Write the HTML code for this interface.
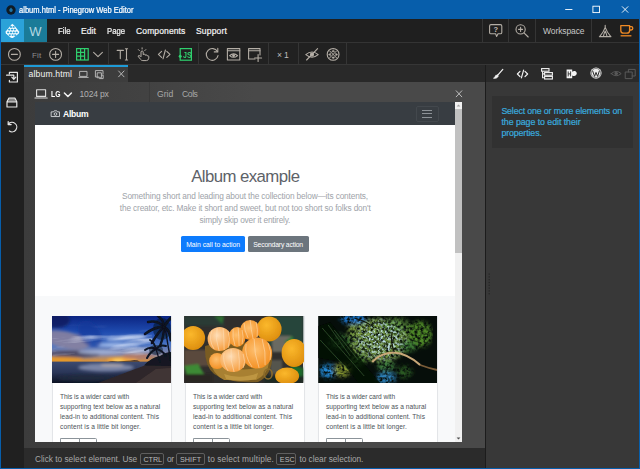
<!DOCTYPE html>
<html lang="en"><head><meta charset="utf-8"><title>album.html - Pinegrow Web Editor</title>
<style>
html,body{margin:0;padding:0;}
body{width:640px;height:469px;position:relative;overflow:hidden;background:#383838;font-family:"Liberation Sans",sans-serif;}
.a{position:absolute;}
.t{position:absolute;white-space:pre;line-height:1;font-family:"Liberation Sans",sans-serif;}
svg{position:absolute;overflow:visible;}
.sep{position:absolute;width:1px;background:#353535;}
.ic{fill:none;stroke:#b4aea6;stroke-width:1.1;stroke-linecap:round;stroke-linejoin:round;}
.kbd{position:absolute;border:1px solid #5e5e5e;border-radius:2px;box-sizing:border-box;background:#2a2a2a;}
.card{top:213.5px;width:120px;height:140px;background:#fff;border:0.5px solid #e3e5e8;box-sizing:border-box;box-shadow:0 0.5px 1px rgba(0,0,0,.08);}
.bg{top:336px;width:19.5px;height:12px;border:0.6px solid #8b9399;border-right:none;border-radius:1.5px 0 0 1.5px;box-sizing:border-box;background:#fff;}
.bg2{top:336px;width:17.5px;height:12px;border:0.6px solid #8b9399;border-radius:0 1.5px 1.5px 0;box-sizing:border-box;background:#fff;}

</style></head>
<body>
<!-- window title bar -->
<div class="a" id="titlebar" style="left:0;top:0;width:640px;height:19px;background:#075eab;"></div>
<svg style="left:5.6px;top:4.6px" width="10" height="10" viewBox="0 0 10 10"><circle cx="5" cy="5" r="4.7" fill="#0f1a24"/><path d="M5 2.4 L6.8 4.8 Q7 6.6 5 7.2 Q3 6.6 3.2 4.8 Z" fill="#1d74a8"/></svg>
<svg style="left:560px;top:0" width="80" height="19" viewBox="0 0 80 19"><g stroke="#fff" stroke-width="0.9" fill="none"><path d="M5.2 9.5 H12.4"/><rect x="32.9" y="6.2" width="6.6" height="6.4"/><path d="M62 6.4 L68.2 12.6 M68.2 6.4 L62 12.6"/></g></svg>

<!-- menu bar -->
<div class="a" id="menubar" style="left:0;top:19px;width:640px;height:24px;background:#1f1f1f;"></div>
<div class="a" style="left:0;top:19px;width:24px;height:23px;background:#2ba2d9;"></div>
<div class="a" style="left:24px;top:19px;width:23px;height:23px;background:#1a7b98;"></div>
<div class="a" style="left:0;top:42px;width:640px;height:1px;background:#343434;"></div>

<!-- toolbar -->
<div class="a" id="toolbar" style="left:0;top:43px;width:640px;height:21px;background:#212121;"></div>
<div class="a" style="left:0;top:64px;width:640px;height:1px;background:#363636;"></div>

<!-- left sidebar -->
<div class="a" id="sidebar" style="left:0;top:65px;width:24px;height:404px;background:#202020;"></div>

<!-- tab bar -->
<div class="a" id="tabbar" style="left:24px;top:65px;width:461px;height:17.400px;background:#292929;"></div>
<div class="a" id="tab" style="left:24px;top:65px;width:104px;height:17.400px;background:#3d3d3d;border-top:2.400px solid #1e9bd7;box-sizing:border-box;"></div>

<!-- page view -->
<div class="a" id="pageview" style="left:24px;top:82.400px;width:461px;height:365.600px;background:linear-gradient(to right,#3c3c3c 0,#424242 120px,#494949 230px);"></div>
<div class="a" style="left:149px;top:82px;width:1px;height:20px;background:#3a3a3a;"></div>

<!-- status bar -->
<div class="a" id="status" style="left:24px;top:448px;width:461px;height:21px;background:#2b2b2b;"></div>

<!-- right panel -->
<div class="a" style="left:485px;top:65px;width:1px;height:404px;background:#1c1c1c;"></div>
<div class="a" id="rtabs" style="left:486px;top:65px;width:154px;height:17.400px;background:#2a2a2a;"></div>
<div class="a" id="rpanel" style="left:486px;top:82.400px;width:154px;height:386.600px;background:#383838;"></div>
<div class="a" style="left:492px;top:95.5px;width:141px;height:52.5px;background:#313131;"></div>

<!-- window border -->
<div class="a" style="left:0;top:19px;width:1px;height:450px;background:#075eab;"></div>
<div class="a" style="left:639px;top:19px;width:1px;height:450px;background:#075eab;"></div>
<div class="a" style="left:0;top:468px;width:640px;height:1px;background:#075eab;"></div>

<!-- the page (iframe) -->
<div class="a" id="page" style="left:35px;top:102px;width:427px;height:340px;background:#f8f9fa;overflow:hidden;">
  <div class="a" style="left:0;top:0;width:420px;height:23px;background:#383d42;"></div>
  <div class="a" style="left:0;top:23px;width:420px;height:171px;background:#ffffff;"></div>
  <!-- navbar brand icon + toggler -->
  <svg style="left:15.800px;top:8.200px" width="9" height="7.200" viewBox="0 0 10 8"><path class="ic" style="stroke:#e8eaec;stroke-width:0.9" d="M0.6 2.1 H2.8 L3.6 0.9 H6.4 L7.2 2.1 H9.4 V7.3 H0.6 Z"/><circle cx="5" cy="4.5" r="1.5" fill="none" stroke="#e8eaec" stroke-width="0.9"/></svg>
  <div class="a" style="left:380.5px;top:3.5px;width:23px;height:16px;border:1px solid #43484d;border-radius:2px;box-sizing:border-box;"></div>
  <div class="a" style="left:387px;top:7.6px;width:10px;height:1px;background:#8d9297;"></div>
  <div class="a" style="left:387px;top:11.2px;width:10px;height:1px;background:#8d9297;"></div>
  <div class="a" style="left:387px;top:14.8px;width:10px;height:1px;background:#8d9297;"></div>
  <!-- buttons -->
  <div class="a" style="left:145.8px;top:134.3px;width:64.7px;height:16.2px;background:#0d7bfd;border-radius:1.6px;"></div>
  <div class="a" style="left:212.6px;top:134.3px;width:61.2px;height:16.2px;background:#6c757d;border-radius:1.6px;"></div>
  <!-- cards -->
  <div class="a card" style="left:16.5px;"></div>
  <div class="a card" style="left:149.5px;"></div>
  <div class="a card" style="left:282.5px;"></div>
  <div class="a bg" style="left:25px;"></div><div class="a bg2" style="left:44px;"></div>
  <div class="a bg" style="left:158px;"></div><div class="a bg2" style="left:177px;"></div>
  <div class="a bg" style="left:291px;"></div><div class="a bg2" style="left:310px;"></div>
    <svg style="left:17px;top:214px;overflow:hidden" width="119" height="67" viewBox="0 0 119 67">
    <defs>
      <linearGradient id="sky" x1="0" y1="0" x2="0" y2="1">
        <stop offset="0" stop-color="#0b2482"/><stop offset="0.35" stop-color="#1f4cb0"/><stop offset="0.62" stop-color="#4a74c4"/><stop offset="0.84" stop-color="#8886a2"/><stop offset="1" stop-color="#e4922a"/>
      </linearGradient>
      <linearGradient id="sea" x1="0" y1="0" x2="0" y2="1">
        <stop offset="0" stop-color="#3c4a70"/><stop offset="0.5" stop-color="#2a3658"/><stop offset="1" stop-color="#0c1222"/>
      </linearGradient>
      <filter id="b1" x="-20%" y="-20%" width="140%" height="140%"><feGaussianBlur stdDeviation="1.5"/></filter>
      <filter id="b2" x="-20%" y="-20%" width="140%" height="140%"><feGaussianBlur stdDeviation="0.45"/></filter>
      <filter id="stk" x="0" y="0" width="100%" height="100%">
        <feTurbulence type="fractalNoise" baseFrequency="0.018 0.16" numOctaves="3" seed="11" result="n"/>
        <feColorMatrix in="n" type="matrix" values="0 0 0 0 0.780  0 0 0 0 0.820  0 0 0 0 0.940  0 2.600 0 0 -1.420"/>
      </filter>
      <linearGradient id="fade" x1="0" y1="0" x2="0" y2="1"><stop offset="0" stop-color="#fff" stop-opacity="0"/><stop offset="0.350" stop-color="#fff" stop-opacity=".9"/><stop offset="0.850" stop-color="#fff" stop-opacity=".9"/><stop offset="1" stop-color="#fff" stop-opacity="0"/></linearGradient>
      <mask id="skm"><rect x="0" y="8" width="100" height="34" fill="url(#fade)"/></mask>
    </defs>
    <rect width="119" height="46" fill="url(#sky)"/>
    <g filter="url(#b1)">
      <ellipse cx="4" cy="4" rx="14" ry="8" fill="#101c5c" opacity=".8"/>
      <ellipse cx="14" cy="24" rx="24" ry="8.500" fill="#8882a0" opacity=".9" transform="rotate(12 14 24)"/>
      <ellipse cx="22" cy="38" rx="26" ry="3.600" fill="#4a4660" opacity=".9"/>
      <ellipse cx="10" cy="43.500" rx="20" ry="2.600" fill="#e89a28"/>
      <ellipse cx="70" cy="44" rx="15" ry="2.600" fill="#f8ac38"/><ellipse cx="66" cy="44.500" rx="5" ry="1.800" fill="#ffd060"/>
      <ellipse cx="86" cy="40.500" rx="16" ry="2.800" fill="#b47a68" opacity=".9"/>
      <ellipse cx="74" cy="22" rx="20" ry="2" fill="#b8ccf0" opacity=".9" transform="rotate(-4 74 22)"/>
      <ellipse cx="66" cy="29" rx="22" ry="2.200" fill="#a8c0ec" opacity=".85"/>
      <ellipse cx="48" cy="36" rx="22" ry="2" fill="#a9bce0" opacity=".8"/>
      <ellipse cx="38" cy="18" rx="10" ry="15" fill="#17389a" opacity=".6" transform="rotate(-38 38 18)"/>
    </g>
    <g mask="url(#skm)"><rect x="0" y="0" width="119" height="46" filter="url(#stk)" transform="rotate(-6 60 23)"/></g>
    <rect y="45.600" width="119" height="21.400" fill="url(#sea)"/>
    <g filter="url(#b1)">
      <ellipse cx="54" cy="51.500" rx="28" ry="4" fill="#8c96b6" opacity=".8"/><ellipse cx="60" cy="49" rx="12" ry="1.600" fill="#c8b8b0" opacity=".7"/>
      <ellipse cx="34" cy="62" rx="28" ry="3" fill="#222a3e" opacity=".8"/>
    </g>
    <g filter="url(#b2)">
      <path d="M46 67 L94 49 L119 48 V67 Z" fill="#2e2629"/><path d="M84 67 L104 53 L119 52 V67 Z" fill="#4a3c3a" opacity=".7"/>
      <path d="M56 45.800 Q60 44.400 66 45.600 L88 45.400 Q84 43.600 78 44.800 L66 45.200 Z" fill="#1a1824"/>
      <path d="M92 49.500 Q98 42 108 40 Q114 36 119 36 V50 Z" fill="#121820"/>
      <ellipse cx="110" cy="13" rx="9" ry="11" fill="#0a1220" opacity=".55"/>
      <ellipse cx="104" cy="34" rx="7" ry="5" fill="#0a1220" opacity=".5"/>
      <g stroke="#0a1220" fill="none" stroke-linecap="round">
        <path d="M112 11 Q106 4 96 6" stroke-width="2.400"/>
        <path d="M112 11 Q104 10 93 18" stroke-width="2.600"/>
        <path d="M112 11 Q106 16 100 27" stroke-width="2.600"/>
        <path d="M112 11 Q112 20 108 30" stroke-width="2.400"/>
        <path d="M112 11 Q116 4 119 2" stroke-width="3"/>
        <path d="M112 11 Q112 4 106 0" stroke-width="2.600"/>
        <path d="M112 11 Q118 14 119 24" stroke-width="3"/>
        <path d="M113 11 Q116 30 119 46" stroke-width="1.400"/>
        <path d="M104 33 Q98 30 93 34" stroke-width="2"/>
        <path d="M104 33 Q98 36 95 42" stroke-width="2"/>
        <path d="M104 33 Q108 28 114 30" stroke-width="2"/>
        <path d="M104 33 Q110 34 114 40" stroke-width="2"/>
        <path d="M104 33 Q102 26 98 24" stroke-width="1.800"/>
        <path d="M104 33 Q106 40 108 46" stroke-width="1.200"/>
      </g>
    </g>
  </svg>
  <svg style="left:149.4px;top:214px;overflow:hidden" width="119.2" height="67" viewBox="0 0 119 67">
    <defs>
      <radialGradient id="o1" cx=".4" cy=".35" r=".7"><stop offset="0" stop-color="#fbb82c"/><stop offset="1" stop-color="#dc8c0c"/></radialGradient>
      <radialGradient id="o2" cx=".4" cy=".35" r=".7"><stop offset="0" stop-color="#fedcb4"/><stop offset="1" stop-color="#f59a38"/></radialGradient>
      <radialGradient id="o3" cx=".45" cy=".4" r=".7"><stop offset="0" stop-color="#fec070"/><stop offset="1" stop-color="#f28a1a"/></radialGradient>
      <filter id="b3" x="-20%" y="-20%" width="140%" height="140%"><feGaussianBlur stdDeviation="1.2"/></filter>
      <filter id="b4" x="-20%" y="-20%" width="140%" height="140%"><feGaussianBlur stdDeviation="0.5"/></filter>
    </defs>
    <rect width="119" height="67" fill="#302e2c"/>
    <g filter="url(#b3)">
      <rect x="0" y="0" width="40" height="10" fill="#2c3a34"/>
      <rect x="84" y="0" width="35" height="30" fill="#27453a"/>
      <rect x="0" y="34" width="26" height="16" fill="#5a4a3c"/>
      <rect x="88" y="20" width="20" height="16" fill="#6a6a62"/>
      <rect x="86" y="44" width="12" height="14" fill="#54544e"/>
      <path d="M0 50 L14 48 L20 58 L4 64 Z" fill="#3d8a34"/>
      <path d="M100 26 L108 20 L112 30 Z" fill="#2e7a34"/>
      <path d="M106 48 L119 52 L119 62 L110 58 Z" fill="#1d6a2c"/>
      <path d="M30 0 L40 0 L38 8 Z" fill="#2d6a30"/>
      <rect x="0" y="58" width="28" height="9" fill="#2a2624"/>
      <rect x="80" y="60" width="39" height="7" fill="#1e2a22"/>
    </g>
    <g filter="url(#b4)">
      <circle cx="9" cy="22" r="12" fill="url(#o1)"/>
      <circle cx="85" cy="13" r="12.5" fill="url(#o1)"/>
      <ellipse cx="110" cy="37" rx="12.5" ry="14" fill="url(#o1)"/>
      <ellipse cx="103" cy="60" rx="12" ry="8.5" fill="url(#o1)"/>
      <path d="M21 30 Q20 50 30 58 Q44 68 74 66 Q90 58 88 34 Q60 20 21 30 Z" fill="#7a5c22"/>
      <path d="M26 44 Q28 58 40 64 L72 64 Q84 58 85 46 Q60 62 26 44 Z" fill="#a88030"/><path d="M40 58 Q56 64 74 57 L72 63 Q56 67 42 63 Z" fill="#c8a04a" opacity=".7"/>
      <ellipse cx="84" cy="58" rx="4" ry="5" fill="none" stroke="#8a6a2c" stroke-width="1.6"/>
      <circle cx="66" cy="14" r="10" fill="url(#o3)"/>
      <circle cx="35.500" cy="23" r="12" fill="url(#o2)"/>
      <ellipse cx="53" cy="21" rx="8.500" ry="10" fill="url(#o3)"/>
      <circle cx="33" cy="45" r="8" fill="url(#o3)"/>
      <ellipse cx="73" cy="37" rx="15" ry="15.500" fill="url(#o3)"/>
      <ellipse cx="49" cy="44" rx="13" ry="12" fill="url(#o2)"/>
      <g fill="none" stroke="#fde2c0" stroke-width="0.700" opacity=".75">
        <path d="M28 14 Q24 24 30 33 M33 12 Q31 24 35 35 M39 12 Q40 24 40 34 M44 15 Q47 24 44 32"/>
        <path d="M40 37 Q38 46 44 55 M47 33 Q46 45 50 56 M54 34 Q56 45 55 54 M59 38 Q62 46 59 52"/>
        <path d="M62 28 Q60 40 68 51 M70 23 Q70 38 75 52 M78 23 Q82 36 81 49 M84 27 Q88 36 86 44"/>
        <path d="M49 13 Q48 21 51 30 M54 11.500 Q55 21 55 30 M58 14 Q60 21 58 28"/>
        <path d="M60 7 Q60 14 64 22 M66 4 Q67 14 69 23 M72 6 Q74 14 73 21"/>
      </g>
    </g>
  </svg>
  <svg style="left:283px;top:214px;overflow:hidden" width="119.4" height="67" viewBox="0 0 119 67">
    <defs>
      <filter id="b5" x="-20%" y="-20%" width="140%" height="140%"><feGaussianBlur stdDeviation="2"/></filter>
      <filter id="b6" x="-20%" y="-20%" width="140%" height="140%"><feGaussianBlur stdDeviation="0.6"/></filter>
      <filter id="nz" x="0" y="0" width="100%" height="100%">
        <feTurbulence type="fractalNoise" baseFrequency="0.34" numOctaves="2" seed="7" result="n"/>
        <feColorMatrix in="n" type="matrix" values="0 0 0 0 0  0 0 0 0 0  0 0 0 0 0  2.800 0 0 0 -1.050" result="m"/>
        <feComposite in="SourceGraphic" in2="m" operator="out"/>
      </filter>
      <filter id="nz2" x="0" y="0" width="100%" height="100%">
        <feTurbulence type="fractalNoise" baseFrequency="0.4" numOctaves="2" seed="23" result="n"/>
        <feColorMatrix in="n" type="matrix" values="0 0 0 0 0.560  0 0 0 0 0.800  0 0 0 0 0.900  0 3.600 0 0 -1.620"/>
      </filter>
      <radialGradient id="cm" cx=".5" cy=".5" r=".5"><stop offset="0" stop-color="#fff"/><stop offset="0.600" stop-color="#fff" stop-opacity=".8"/><stop offset="1" stop-color="#fff" stop-opacity="0"/></radialGradient>
      <mask id="cmk"><ellipse cx="62" cy="24" rx="30" ry="24" fill="url(#cm)"/></mask>
    </defs>
    <rect width="119" height="67" fill="#060e0a"/>
    <g filter="url(#nz)">
    <g filter="url(#b5)">
      <ellipse cx="60" cy="24" rx="32" ry="22" fill="#6a8c3c"/>
      <ellipse cx="44" cy="12" rx="14" ry="7" fill="#7c9c3c"/>
      <ellipse cx="35" cy="3" rx="13" ry="5" fill="#1a7cd8"/>
      <ellipse cx="78" cy="10" rx="14" ry="8" fill="#5a8a3a"/>
      <ellipse cx="102" cy="18" rx="12" ry="13" fill="#4e8626"/>
      <ellipse cx="90" cy="30" rx="9" ry="6" fill="#3e7a34"/>
      <ellipse cx="10" cy="55" rx="9" ry="7" fill="#2288d4"/>
      <ellipse cx="24" cy="54" rx="9" ry="7" fill="#8a9a32"/>
      <ellipse cx="68" cy="62" rx="10" ry="6" fill="#2f84c0"/>
      <ellipse cx="68" cy="50" rx="9" ry="6" fill="#3c7a3c"/>
      <ellipse cx="86" cy="56" rx="8" ry="6" fill="#2a5a22"/>
      <ellipse cx="22" cy="26" rx="12" ry="8" fill="#2c5a2c"/>
      <ellipse cx="40" cy="44" rx="8" ry="6" fill="#3a6a2c"/>
    </g>
    </g>
    <g mask="url(#cmk)"><rect width="119" height="67" filter="url(#nz2)"/></g>
    <g filter="url(#b6)">
      <path d="M0 10 L12 6 L48 50 L62 67 L40 67 L24 46 L0 42 Z" fill="#040b08" opacity=".72"/>
      <path d="M4 12 L46 60 M10 9 L32 40 M2 24 L30 54 M16 14 L40 44" stroke="#3c6a30" stroke-width="0.800" fill="none" opacity=".8"/>
      <path d="M54 46 Q62 37 76 36.500 Q90 38 102 49" fill="none" stroke="#c8a878" stroke-width="2.200"/>
      <path d="M102 49 Q110 52 119 54" fill="none" stroke="#7a5c38" stroke-width="1.800"/>
      <path d="M76 36 Q72 26 74 16" fill="none" stroke="#14160e" stroke-width="1.200"/>
      <path d="M36 2 Q50 6 56 12" fill="none" stroke="#10140e" stroke-width="1.200"/>
    </g>
  </svg>

  <!-- scrollbar -->
  <div class="a" style="left:420px;top:0;width:7px;height:340px;background:#f1f1f1;"></div>
  <div class="a" style="left:420px;top:7px;width:7px;height:144px;background:#c1c1c1;"></div>
  <svg style="left:420px;top:0" width="7" height="340" viewBox="0 0 7 340"><path d="M1.6 4.6 L3.5 2.4 L5.4 4.6 Z" fill="#a3a3a3"/><path d="M1.6 335.4 L3.5 337.6 L5.4 335.4 Z" fill="#505050"/></svg>
</div>

<svg id="icons" style="left:0;top:0" width="640" height="469" viewBox="0 0 640 469">
  <!-- pinegrow logo -->
  <g id="logo">
    <path d="M12.200 23.700 Q15 25.800 19.100 31.600 Q19.500 32.700 18.600 33.700 L13.200 37.700 Q11.600 38.500 10.200 37.300 L5.900 33.500 Q5.300 32.500 5.900 31.200 Z" fill="#f4fbff"/>
    <g fill="#2ba2d9"><ellipse cx="11.0" cy="26.9" rx="1.150" ry="0.850"/><ellipse cx="13.6" cy="26.9" rx="1.150" ry="0.850"/><ellipse cx="9.2" cy="29.6" rx="1.150" ry="0.850"/><ellipse cx="12.0" cy="29.6" rx="1.150" ry="0.850"/><ellipse cx="14.8" cy="29.6" rx="1.150" ry="0.850"/><ellipse cx="8.2" cy="32.4" rx="1.150" ry="0.850"/><ellipse cx="11.0" cy="32.4" rx="1.150" ry="0.850"/><ellipse cx="13.8" cy="32.4" rx="1.150" ry="0.850"/><ellipse cx="16.6" cy="32.4" rx="1.150" ry="0.850"/><ellipse cx="9.8" cy="35.1" rx="1.150" ry="0.850"/><ellipse cx="12.6" cy="35.1" rx="1.150" ry="0.850"/><ellipse cx="15.2" cy="35.1" rx="1.150" ry="0.850"/></g>
  </g>
  <!-- toolbar: zoom out / zoom in -->
  <g class="ic">
    <circle cx="14.4" cy="54.4" r="5.9"/><path d="M11.4 54.4 H17.4"/>
    <circle cx="55.6" cy="54.4" r="5.9"/><path d="M52.6 54.4 H58.6 M55.6 51.4 V57.4"/>
  </g>
  <!-- green grid icon -->
  <g fill="none" stroke="#2fd06e" stroke-width="1.2">
    <rect x="76.6" y="48.6" width="11.6" height="11.4"/>
    <path d="M76.6 52.4 H84.6 M76.6 56.2 H84.6 M80.6 48.6 V60 M84.6 48.6 V60"/>
  </g>
  <path class="ic" d="M93.6 52.4 L98 56.6 L102.4 52.4"/>
  <!-- text tool -->
  <g class="ic"><path d="M117.2 50.4 H123.4 M120.3 50.4 V58.6"/><path d="M125.4 48.8 H127.6 M126.5 48.8 V60 M125.4 60 H127.6"/></g>
  <!-- hand -->
  <g class="ic" style="stroke-width:1">
    <path d="M141 56.400 V51.600 Q142.100 50.200 143.200 51.600 V54.600 Q144.200 53.600 145.200 54.600 V55.200 Q146.200 54.400 147.100 55.400 V55.900 Q148 55.300 148.800 56.300 V58.200 Q148.600 60.400 146.400 60.600 H142.800 Q141.400 60.600 140.400 59.200 L138 56.200 Q138.800 54.800 140.200 56 Z"/>
    <path d="M139.400 50.600 L138.400 49.600 M142.100 49 V47.800 M144.800 50.600 L145.800 49.600"/>
  </g>
  <!-- code -->
  <g class="ic"><path d="M161.6 51.4 L158.4 54.4 L161.6 57.4 M166.8 51.4 L170 54.4 L166.8 57.4 M165.4 50 L163 58.8"/></g>
  <!-- JS -->
  <g><rect x="180.2" y="48.6" width="11.2" height="11.6" fill="none" stroke="#2fd06e" stroke-width="1.2"/><circle cx="180.2" cy="56.2" r="1.5" fill="#2fd06e"/></g>
  <!-- refresh -->
  <g class="ic"><path d="M217.4 51.6 A5.9 5.9 0 1 0 218 55.6"/><path d="M217.8 48.4 V51.9 H214.3"/></g>
  <!-- window eye -->
  <g class="ic"><rect x="227.4" y="48.6" width="12.4" height="11.4"/><path d="M227.4 50.8 H239.8"/><path d="M229.6 55.6 Q233.6 52.2 237.6 55.6 Q233.6 59 229.6 55.6 Z"/><circle cx="233.6" cy="55.6" r="0.9" fill="#c4beb6"/></g>
  <!-- new window -->
  <g class="ic"><path d="M255 59 H248.600 V48.600 H260 V55"/><path d="M248.600 50.800 H260"/><path d="M254.600 58 H261.600 M258.100 54.600 V61.400"/></g>
  <!-- eye off -->
  <g class="ic"><path d="M305.800 54.600 Q312 49.400 318.200 54.600 Q312 59.800 305.800 54.600 Z"/><circle cx="312" cy="54.600" r="1.500" fill="#c4beb6"/><path d="M306.600 60 L317.600 48.600"/></g>
  <!-- target circle -->
  <g class="ic"><circle cx="333.100" cy="54.400" r="5.900"/><path d="M329.600 50.900 L336.600 57.900 M336.600 50.900 L329.600 57.900" stroke-width="1"/><path d="M333.100 50 L331.900 51.800 H334.300 Z M333.100 58.800 L331.900 57 H334.300 Z M328.700 54.400 L330.500 53.200 V55.600 Z M337.500 54.400 L335.700 53.200 V55.600 Z" fill="#c4beb6" stroke-width="0.500"/></g>
  <!-- help -->
  <g class="ic"><path d="M491 24.600 H500.400 Q501.800 24.600 501.800 26 V32.400 Q501.800 33.800 500.400 33.800 H498 L496.600 36.400 L495.600 33.800 H491 Q489.600 33.800 489.600 32.400 V26 Q489.600 24.600 491 24.600 Z"/></g>
  <!-- zoom (magnifier) -->
  <g class="ic"><circle cx="520.600" cy="29.400" r="4.600"/><path d="M518.600 29.400 H522.600 M520.600 27.400 V31.400"/><path d="M524 32.800 L528.200 37"/></g>
  <!-- compass / A icon -->
  <g class="ic"><path d="M605.200 25.400 V27.400 M605.200 27.400 Q603.600 32 599.800 36.400 M605.200 27.400 Q606.800 32 610.600 36.400 M603.400 36.400 Q604.200 33 605.200 31 Q606.200 33 607 36.400 M599.400 36.600 H611"/></g>
  <!-- coffee cup -->
  <g fill="none" stroke="#f08a24" stroke-width="1.300" stroke-linejoin="round"><path d="M620.800 25.600 H629.600 V30.400 Q629.600 33.200 626.800 33.200 H623.600 Q620.800 33.200 620.800 30.400 Z"/><path d="M629.600 26.600 H631.200 Q632.800 26.600 632.800 28.200 Q632.800 30 631.200 30 H629.600"/><path d="M620.600 35.800 H631.400"/></g>
  <!-- sidebar icons -->
  <g class="ic" stroke="#e6e6e6" style="stroke:#e6e6e6;stroke-width:1.200">
    <path d="M9.400 74 V72.400 H17.400 V82 H9.400 V80.400"/><path d="M6.600 75.200 H13.800 V79 M11.800 77.200 L13.800 79.400 L15.800 77.200"/>
    <path d="M7 107 V101.800 L8.800 98.200 H15 L16.800 101.800 V107 Z M7 101.800 H16.800 M9 100 H14.800"/>
    <path d="M8.400 124.200 A4.700 4.700 0 1 1 9.400 131"/><path d="M8.200 121.600 V124.600 H11.200"/>
  </g>
  <!-- tab icons -->
  <g class="ic" style="stroke:#b4b4b4;stroke-width:1">
    <rect x="80" y="71.400" width="7" height="5"/><path d="M78.800 77.400 H88.200"/>
    <path d="M99 77 H95.400 V70.600 H103 V74"/><path d="M97.600 72.800 H101.400 V77.800 H97.600 Z M101.400 75.200 H103.200 V78.600 H99.600"/>
    <path d="M118.600 71 L124 76.800 M124 71 L118.600 76.800"/>
  </g>
  <!-- device laptop + chevron -->
  <g class="ic" style="stroke:#e0e0e0;stroke-width:1.100"><rect x="36.600" y="89.800" width="9" height="6.600"/><path d="M35 98 H47.200"/></g>
  <path class="ic" style="stroke:#f4f4f4;stroke-width:1.500" d="M64.400 93 L67.900 96.500 L71.400 93"/>
  <!-- page close X -->
  <path class="ic" style="stroke:#bdbdbd;stroke-width:1" d="M456.200 90.800 L461.800 96.800 M461.800 90.800 L456.200 96.800"/>
  <!-- right panel icons -->
  <g class="ic" style="stroke:#f2f2f2;stroke-width:1.200">
    <path d="M502.800 69.400 L497.800 75.200"/><path d="M497.600 75 Q495.200 74.600 494.800 77 Q494.400 78 493.400 78.200 Q496.800 79 498.200 76.600 Q498.600 75.600 497.600 75 Z" fill="#f2f2f2" stroke-width="0.600"/>
    <path d="M520 71.400 L517.400 74 L520 76.600 M525 71.400 L527.600 74 L525 76.600 M523.600 70.200 L521.400 77.800"/>
  </g>
  <g fill="none" stroke="#f2f2f2" stroke-width="1.100">
    <rect x="541.600" y="68.600" width="7.400" height="2.600"/><rect x="544.600" y="72.600" width="7.800" height="2.600"/><rect x="544.600" y="76.400" width="7.800" height="2.600"/><path d="M542.600 71.200 V77.700 H544.600 M542.600 73.900 H544.600"/>
  </g>
  <path d="M566.600 69.400 H572.200 V71.800 Q573.400 70.600 575.200 71 Q577 72 576.800 73.800 Q576.400 75.800 574.400 76 Q573 76 572.200 75.400 V78.200 H566.600 Z" fill="#f4f4f4"/>
  <path d="M568.200 71.400 V76.400 M570.600 71.400 V76.400 M568.200 73.900 H570.600" stroke="#2a2a2a" stroke-width="0.900" fill="none"/>
  <circle cx="596" cy="73.100" r="5.600" fill="#ececec"/>
  <circle cx="596" cy="73.100" r="4.700" fill="none" stroke="#2a2a2a" stroke-width="0.500"/>
  <path d="M592.600 70.800 L594.600 76.400 L596 72.400 L597.600 76.400 L599.400 70.800" fill="none" stroke="#2a2a2a" stroke-width="1"/>
  <g class="ic" style="stroke:#595959;stroke-width:1"><path d="M611.200 73.600 Q616.200 69.200 621.200 73.600 Q616.200 78 611.200 73.600 Z"/><circle cx="616.200" cy="73.600" r="1.300" fill="#595959"/>
    <rect x="625.600" y="72" width="6.600" height="6.600"/><path d="M628.400 72 V69.400 H635.200 V76 H632.200"/></g>
  <!-- grip dots -->
  <g fill="#242424"><rect x="488.600" y="273.500" width="1.200" height="1.200"/><rect x="488.600" y="276.300" width="1.200" height="1.200"/><rect x="488.600" y="279.100" width="1.200" height="1.200"/><rect x="488.600" y="281.900" width="1.200" height="1.200"/><rect x="488.600" y="284.700" width="1.200" height="1.200"/><rect x="488.600" y="287.500" width="1.200" height="1.200"/><rect x="488.600" y="290.300" width="1.200" height="1.200"/><rect x="488.600" y="293.100" width="1.200" height="1.200"/></g>
</svg>
<!-- kbd boxes -->
<div class="kbd" style="left:139.600px;top:452.800px;width:24.400px;height:11.800px;"></div>
<div class="kbd" style="left:176.200px;top:452.800px;width:29px;height:11.800px;"></div>
<div class="kbd" style="left:276.400px;top:452.800px;width:20px;height:11.800px;"></div>
<!-- toolbar / menubar separators -->
<div class="sep" style="left:68px;top:43px;height:21px;"></div>
<div class="sep" style="left:108px;top:43px;height:21px;"></div>
<div class="sep" style="left:198px;top:43px;height:21px;"></div>
<div class="sep" style="left:268px;top:43px;height:21px;"></div>
<div class="sep" style="left:298px;top:43px;height:21px;"></div>
<div class="sep" style="left:346px;top:43px;height:21px;"></div>
<div class="sep" style="left:482px;top:19px;height:23px;"></div>
<div class="sep" style="left:508px;top:19px;height:23px;"></div>
<div class="sep" style="left:535px;top:19px;height:23px;"></div>
<div class="sep" style="left:591px;top:19px;height:23px;"></div>


<div id="texts">
<span class="t" style="left:18.60px;top:5px;line-height:10px;font-size:8.3px;color:#ffffff;transform:scaleX(0.9106);transform-origin:0 0;-webkit-text-stroke:0.22px currentColor">album.html - Pinegrow Web Editor</span>
<span class="t" style="left:57.50px;top:26px;line-height:10px;font-size:8.5px;color:#f2f2f2;transform:scaleX(0.9122);transform-origin:0 0;-webkit-text-stroke:0.22px currentColor">File</span>
<span class="t" style="left:81.00px;top:26px;line-height:10px;font-size:8.5px;color:#f2f2f2;letter-spacing:0.086px;-webkit-text-stroke:0.22px currentColor">Edit</span>
<span class="t" style="left:107.00px;top:26px;line-height:10px;font-size:8.5px;color:#f2f2f2;transform:scaleX(0.9064);transform-origin:0 0;-webkit-text-stroke:0.22px currentColor">Page</span>
<span class="t" style="left:136.00px;top:26px;line-height:10px;font-size:8.5px;color:#f2f2f2;letter-spacing:0.130px;-webkit-text-stroke:0.22px currentColor">Components</span>
<span class="t" style="left:196.00px;top:26px;line-height:10px;font-size:8.5px;color:#f2f2f2;letter-spacing:0.174px;-webkit-text-stroke:0.22px currentColor">Support</span>
<span class="t" style="left:543.00px;top:26px;line-height:10px;font-size:8.5px;color:#c8c8c8;letter-spacing:-0.095px">Workspace</span>
<span class="t" style="left:32.00px;top:51px;line-height:9px;font-size:8px;color:#8e8e8e;letter-spacing:0.203px">Fit</span>
<span class="t" style="left:276.90px;top:50px;line-height:10px;font-size:8.6px;color:#bdbdbd;letter-spacing:-0.129px">× 1</span>
<span class="t" style="left:28.60px;top:69px;line-height:10px;font-size:8.6px;color:#f4f4f4;letter-spacing:0.147px">album.html</span>
<span class="t" style="left:50.90px;top:89px;line-height:10px;font-size:8.4px;color:#ffffff;font-weight:700;transform:scaleX(0.8075);transform-origin:0 0">LG</span>
<span class="t" style="left:79.50px;top:89px;line-height:10px;font-size:8.6px;color:#b0b0b0;letter-spacing:-0.199px">1024 px</span>
<span class="t" style="left:157.00px;top:89px;line-height:10px;font-size:8.6px;color:#a8a8a8;letter-spacing:-0.013px">Grid</span>
<span class="t" style="left:182.00px;top:89px;line-height:10px;font-size:8.6px;color:#a8a8a8;letter-spacing:-0.426px">Cols</span>
<span class="t" style="left:63.00px;top:109px;line-height:10px;font-size:8.6px;color:#ffffff;font-weight:700;letter-spacing:-0.247px">Album</span>
<span class="t" style="left:191.20px;top:167px;line-height:19px;font-size:16.8px;color:#5d6268;letter-spacing:-0.567px">Album example</span>
<span class="t" style="left:122.00px;top:191px;line-height:10px;font-size:8.3px;color:#9ea3a9;letter-spacing:-0.147px">Something short and leading about the collection below—its contents,</span>
<span class="t" style="left:119.80px;top:203px;line-height:10px;font-size:8.3px;color:#9ea3a9;letter-spacing:-0.151px">the creator, etc. Make it short and sweet, but not too short so folks don&#x27;t</span>
<span class="t" style="left:199.60px;top:215px;line-height:10px;font-size:8.3px;color:#9ea3a9;letter-spacing:-0.194px">simply skip over it entirely.</span>
<span class="t" style="left:186.20px;top:241px;line-height:7px;font-size:6.8px;color:#ffffff;letter-spacing:-0.032px">Main call to action</span>
<span class="t" style="left:253.20px;top:241px;line-height:7px;font-size:6.8px;color:#ffffff;letter-spacing:-0.171px">Secondary action</span>
<span class="t" style="left:60.00px;top:393px;line-height:7px;font-size:6.6px;color:#4c5258;letter-spacing:-0.054px">This is a wider card with</span>
<span class="t" style="left:60.00px;top:403px;line-height:7px;font-size:6.6px;color:#4c5258;letter-spacing:0.050px">supporting text below as a natural</span>
<span class="t" style="left:60.00px;top:413px;line-height:7px;font-size:6.6px;color:#4c5258;letter-spacing:0.067px">lead-in to additional content. This</span>
<span class="t" style="left:60.00px;top:423px;line-height:7px;font-size:6.6px;color:#4c5258;letter-spacing:0.106px">content is a little bit longer.</span>
<span class="t" style="left:193.00px;top:393px;line-height:7px;font-size:6.6px;color:#4c5258;letter-spacing:-0.054px">This is a wider card with</span>
<span class="t" style="left:193.00px;top:403px;line-height:7px;font-size:6.6px;color:#4c5258;letter-spacing:0.050px">supporting text below as a natural</span>
<span class="t" style="left:193.00px;top:413px;line-height:7px;font-size:6.6px;color:#4c5258;letter-spacing:0.067px">lead-in to additional content. This</span>
<span class="t" style="left:193.00px;top:423px;line-height:7px;font-size:6.6px;color:#4c5258;letter-spacing:0.106px">content is a little bit longer.</span>
<span class="t" style="left:326.00px;top:393px;line-height:7px;font-size:6.6px;color:#4c5258;letter-spacing:-0.054px">This is a wider card with</span>
<span class="t" style="left:326.00px;top:403px;line-height:7px;font-size:6.6px;color:#4c5258;letter-spacing:0.050px">supporting text below as a natural</span>
<span class="t" style="left:326.00px;top:413px;line-height:7px;font-size:6.6px;color:#4c5258;letter-spacing:0.067px">lead-in to additional content. This</span>
<span class="t" style="left:326.00px;top:423px;line-height:7px;font-size:6.6px;color:#4c5258;letter-spacing:0.106px">content is a little bit longer.</span>
<span class="t" style="left:35.00px;top:454px;line-height:10px;font-size:8.3px;color:#a8a8a8;letter-spacing:-0.006px">Click to select element. Use</span>
<span class="t" style="left:143.40px;top:456px;line-height:8px;font-size:7.2px;color:#bababa;letter-spacing:-0.016px;font-family:"Liberation Mono", monospace">CTRL</span>
<span class="t" style="left:166.90px;top:454px;line-height:10px;font-size:8.3px;color:#a8a8a8;letter-spacing:-0.245px">or</span>
<span class="t" style="left:180.00px;top:456px;line-height:8px;font-size:7.2px;color:#bababa;letter-spacing:0.064px;font-family:"Liberation Mono", monospace">SHIFT</span>
<span class="t" style="left:207.80px;top:454px;line-height:10px;font-size:8.3px;color:#a8a8a8;letter-spacing:0.110px">to select multiple.</span>
<span class="t" style="left:279.80px;top:456px;line-height:8px;font-size:7.2px;color:#bababa;letter-spacing:0.082px;font-family:"Liberation Mono", monospace">ESC</span>
<span class="t" style="left:299.40px;top:454px;line-height:10px;font-size:8.3px;color:#a8a8a8;letter-spacing:-0.030px">to clear selection.</span>
<span class="t" style="left:501.40px;top:106px;line-height:10px;font-size:8.8px;color:#3aaadd;letter-spacing:-0.140px;-webkit-text-stroke:0.22px currentColor">Select one or more elements on</span>
<span class="t" style="left:501.40px;top:117px;line-height:10px;font-size:8.8px;color:#3aaadd;letter-spacing:-0.046px;-webkit-text-stroke:0.22px currentColor">the page to edit their</span>
<span class="t" style="left:501.40px;top:128px;line-height:10px;font-size:8.8px;color:#3aaadd;letter-spacing:-0.106px;-webkit-text-stroke:0.22px currentColor">properties.</span>
<span class="t" style="left:29.30px;top:24px;line-height:15px;font-size:13px;color:#b4d8e2">W</span>
<span class="t" style="left:182.60px;top:50px;line-height:10px;font-size:8.4px;color:#2fd06e;font-weight:700;transform:scaleX(0.8390);transform-origin:0 0">JS</span>
<span class="t" style="left:493.60px;top:25px;line-height:9px;font-size:7.5px;color:#c4beb6;font-weight:700">?</span>
</div>
</body></html>
